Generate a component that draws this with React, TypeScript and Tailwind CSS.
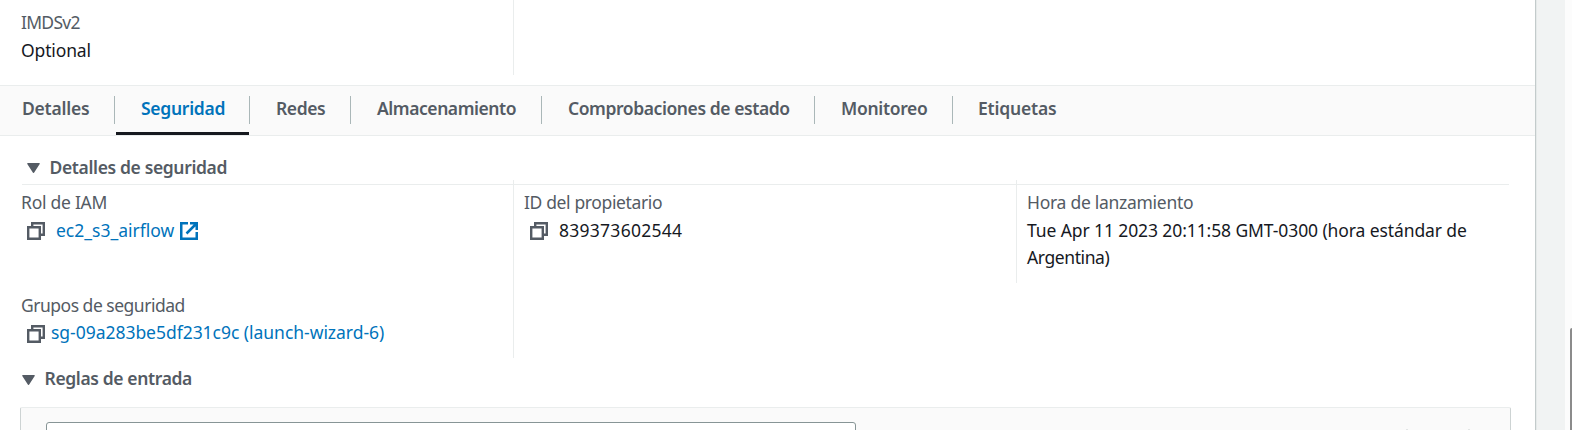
import type { ReactNode } from "react";
import clsx from "clsx";

function CopyIcon() {
  return (
    <svg className="h-[18px] w-[18px] shrink-0" viewBox="0 0 18 18" fill="none" stroke="#545b64" strokeWidth="2.4">
      <path d="M1.2 5.2h11.6v11.6H1.2z" />
      <path d="M5.2 5V1.2h11.6v11.6H13" />
    </svg>
  );
}

function ExternalIcon() {
  return (
    <svg className="h-[18px] w-[18px] shrink-0" viewBox="0 0 18 18" fill="none" stroke="#0073bb" strokeWidth="2.5">
      <path d="M8 1.25H1.25v15.5h15.5V10" />
      <path d="M10 1.25h6.75V8M16.5 1.5 6.5 11.5" />
    </svg>
  );
}

function Caret() {
  return (
    <svg className="h-[10px] w-[13px] shrink-0" viewBox="0 0 13 10" fill="#545b64">
      <path d="M.8 0h11.4a.6.6 0 0 1 .5.9L7.2 9.6a.8.8 0 0 1-1.4 0L.3.9A.6.6 0 0 1 .8 0z" />
    </svg>
  );
}

const tabs = [
  { label: "Detalles", item: "w-[114px] pl-[22px]", text: "tracking-[-0.219px]" },
  { label: "Seguridad", item: "ml-px w-[133px] pl-[25px]", text: "tracking-[-0.278px]", active: true },
  { label: "Redes", item: "w-[100px] pl-[26px]", text: "tracking-[-0.421px]" },
  { label: "Almacenamiento", item: "w-[190px] pl-[26px]", text: "tracking-[-0.44px]" },
  { label: "Comprobaciones de estado", item: "w-[272px] pl-[26px]", text: "tracking-[-0.42px]" },
  { label: "Monitoreo", item: "w-[137px] pl-[26px]", text: "tracking-[-0.32px]" },
  { label: "Etiquetas", item: "pl-[25px]", text: "tracking-[-0.19px]" },
];

function Label({ className, children }: { className: string; children: ReactNode }) {
  return <div className={clsx("h-7 text-[#545b64]", className)}>{children}</div>;
}

export default function App() {
  return (
    <div className="flex h-[430px] w-[1572px] overflow-hidden bg-[#f1f3f3] font-['Noto_Sans',sans-serif] text-[17.5px] leading-[28px] whitespace-nowrap text-[#16191f]">
      <main className="flex h-full w-[1536px] shrink-0 flex-col border-r border-[#c3cbcb] bg-white shadow-[1px_0_0_#e6eaea]">
        <section className="flex h-[85px] shrink-0">
          <div className="h-[75px] w-[514px] border-r border-[#eaeded] pt-[8px] pl-[21px]">
            <Label className="tracking-[-0.715px]">IMDSv2</Label>
            <div className="tracking-[-0.14px]">Optional</div>
          </div>
        </section>

        <nav className="flex h-[51px] shrink-0 border-y border-[#eaeded] bg-[#fafafa] font-semibold text-[#545b64]">
          {tabs.map((t, i) => (
            <div key={t.label} className="flex">
              {i > 0 && <span className="mt-[10px] h-[28px] w-px bg-[#aab7b8]" />}
              <div
                className={clsx(
                  "h-[49px] pt-[8px]",
                  t.item,
                  t.active && "border-b-[3px] border-[#16191f] text-[#0073bb]",
                )}
              >
                <span className={t.text}>{t.label}</span>
              </div>
            </div>
          ))}
        </nav>

        <h2 className="flex h-[44px] shrink-0 items-start gap-[10px] pt-[17px] pl-[26.5px] font-semibold text-[#545b64]">
          <span className="mt-[10px] flex">
            <Caret />
          </span>
          <span className="tracking-[-0.36px]">Detalles de seguridad</span>
        </h2>

        <div className="flex h-[178px] shrink-0">
          <div className="w-[514px] border-r border-[#eaeded] pt-[4px] pl-[21px]">
            <div className="ml-px h-px bg-[#eaeded]" />
            <Label className="mt-[3px] tracking-[-0.259px]">Rol de IAM</Label>
            <div className="flex h-7 items-center pl-[6px] text-[#0073bb]">
              <span className="mt-[2px] flex">
                <CopyIcon />
              </span>
              <span className="ml-[11px] tracking-[-0.01px]">ec2_s3_airflow</span>
              <span className="mt-[2px] ml-[6px] flex">
                <ExternalIcon />
              </span>
            </div>
            <Label className="mt-[47px] tracking-[-0.494px]">Grupos de seguridad</Label>
            <div className="-mt-px flex h-7 items-center pl-[6px] text-[#0073bb]">
              <span className="mt-[4px] flex">
                <CopyIcon />
              </span>
              <span className="ml-[6px] tracking-[-0.03px]">sg-09a283be5df231c9c (launch-wizard-6)</span>
            </div>
          </div>
          <div className="h-[103px] w-[503px] border-r border-[#eaeded] pt-[4px]">
            <div className="h-px bg-[#eaeded]" />
            <Label className="mt-[3px] ml-[10px] tracking-[-0.365px]">ID del propietario</Label>
            <div className="flex h-7 items-center pl-[16px]">
              <span className="mt-[2px] flex">
                <CopyIcon />
              </span>
              <span className="ml-[11px] tracking-[0.263px]">839373602544</span>
            </div>
          </div>
          <div className="w-[492px] pt-[4px]">
            <div className="h-px bg-[#eaeded]" />
            <Label className="mt-[3px] ml-[10px] tracking-[-0.281px]">Hora de lanzamiento</Label>
            <div className="ml-[10px]">
              <div className="h-[27px] tracking-[-0.101px]">Tue Apr 11 2023 20:11:58 GMT-0300 (hora estándar de</div>
              <div className="tracking-[-0.405px]">Argentina)</div>
            </div>
          </div>
        </div>

        <h2 className="flex h-[49px] shrink-0 items-start gap-[10px] pt-[6px] pl-[21.5px] font-semibold text-[#545b64]">
          <span className="mt-[11px] flex">
            <Caret />
          </span>
          <span className="tracking-[-0.37px]">Reglas de entrada</span>
        </h2>

        <div className="ml-[20px] flex h-[60px] w-[1491px] shrink-0 items-start rounded-t-[2px] border border-t-[#eaeded] border-r-[#cdd3d3] border-l-[#cdd3d3] bg-[#fafafa] pt-[14px] pl-[25px]">
          <div className="h-[40px] w-[810px] rounded-[3px] border border-[#879596] bg-white" />
          <div className="mt-[7px] ml-[550px] h-[20px] w-[2px] bg-[#e2e5e5]" />
          <div className="mt-[7px] ml-[60px] h-[20px] w-[2px] bg-[#e2e5e5]" />
        </div>
      </main>

      <aside className="ml-auto flex h-full w-[7px] justify-end bg-[#fcfcfc] pt-[328px]">
        <div className="h-[120px] w-[2px] rounded-tl-[2px] bg-[#8b8b8b]" />
      </aside>
    </div>
  );
}
